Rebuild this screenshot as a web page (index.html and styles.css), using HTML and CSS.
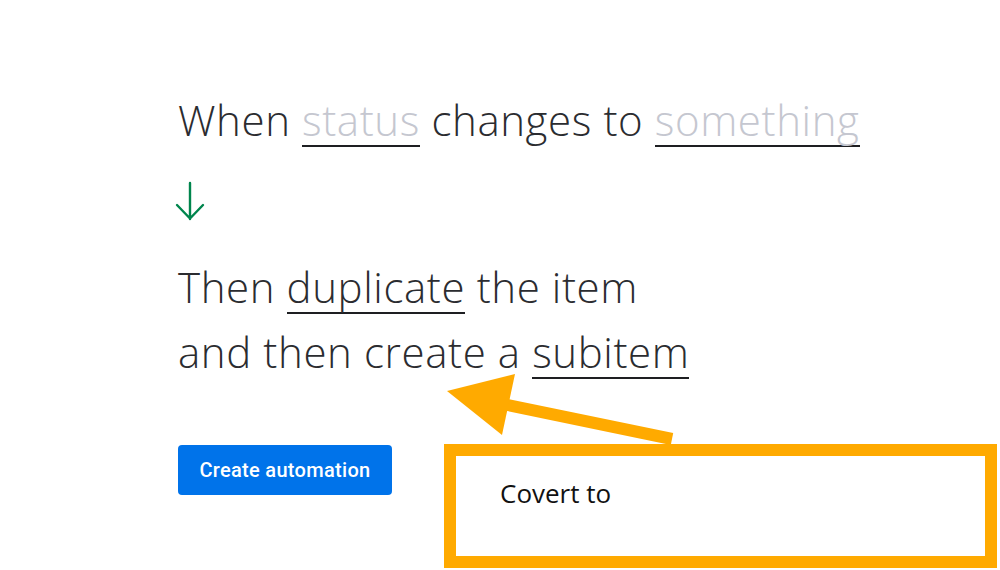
FILE: index.html
```html
<!DOCTYPE html>
<html lang="en">
<head>
  <meta charset="UTF-8" />
  <meta name="viewport" content="width=device-width, initial-scale=1.0"/>
  <title>Automation recipe</title>
  <link rel="stylesheet" href="styles.css">
</head>
<body>
  <main class="recipe">
    <p class="trigger">
      When <span class="field empty">status</span> changes to <span class="field empty">something</span>
    </p>

    <div class="step-arrow">
      <svg width="30" height="38" viewBox="0 0 30 38">
        <path d="M12 0 V36 M-1 22 L12 35.5 L25 22" fill="none" stroke="#00854d" stroke-width="2.4" stroke-linecap="round" stroke-linejoin="round"/>
      </svg>
    </div>

    <p class="action">
      Then <span class="field">duplicate</span> the item<br>
      and then create a <span class="field">subitem</span>
    </p>

    <button class="btn-create">Create automation</button>
  </main>

  <!-- annotation on top of the screenshot -->
  <svg class="pointer" width="1000" height="570" viewBox="0 0 1000 570">
    <line x1="503" y1="404" x2="672" y2="439" stroke="#ffaa00" stroke-width="12"/>
    <polygon points="447,391 515,374 502,435" fill="#ffaa00"/>
  </svg>
  <div class="callout">Covert to</div>
</body>
</html>
```

FILE: styles.css
```css
body {
  margin: 0;
  background: #ffffff;
  font-family: "Open Sans", "Noto Sans", sans-serif;
  color: #2b2c30;
}

.recipe {
  padding: 90px 0 0 178px;
}

.trigger,
.action {
  margin: 0;
  font-weight: 300;
  font-size: 42px;
  letter-spacing: 0.6px;
}

.trigger {
  line-height: 60px;
}

.action {
  line-height: 65px;
}

.field {
  display: inline-block;
  line-height: 44px;
  padding-bottom: 3px;
  border-bottom: 2px solid #1e1f22;
}

.field.empty {
  color: #c5c7d0;
}

.step-arrow {
  height: 71px;
  padding-top: 33px;
}

.step-arrow svg {
  display: block;
  overflow: visible;
}

.btn-create {
  display: block;
  margin-top: 61px;
  width: 214px;
  height: 50px;
  border: none;
  border-radius: 4px;
  background: #0073ea;
  color: #ffffff;
  font-family: Roboto, "Noto Sans", sans-serif;
  font-weight: 500;
  font-size: 20px;
  letter-spacing: 0.3px;
  cursor: pointer;
}

.pointer {
  position: absolute;
  left: 0;
  top: 0;
}

.callout {
  position: absolute;
  left: 444px;
  top: 444px;
  width: 553px;
  height: 124px;
  box-sizing: border-box;
  border: 12px solid #ffaa00;
  background: #ffffff;
  padding: 19px 0 0 44px;
  font-family: "Open Sans", sans-serif;
  font-size: 26px;
  color: #111111;
}
```
